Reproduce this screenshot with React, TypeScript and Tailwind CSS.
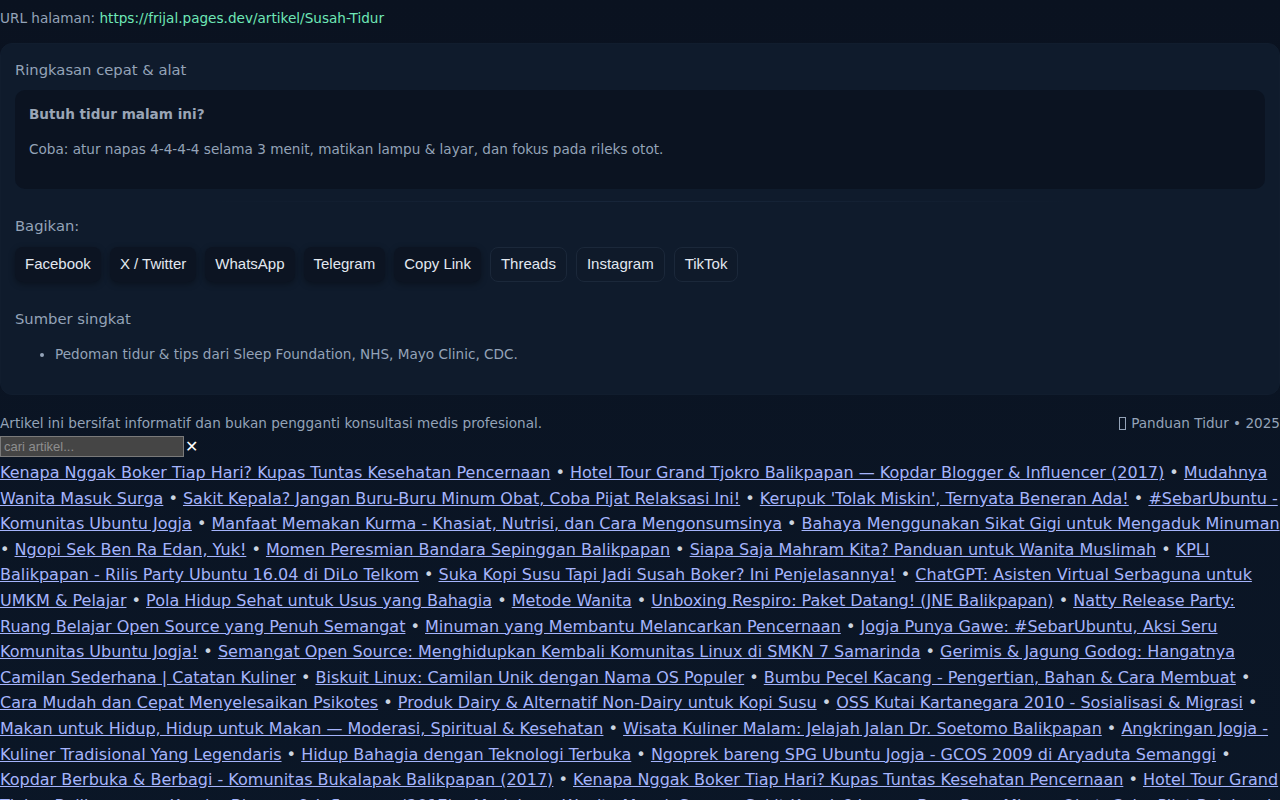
import { FC } from 'react';

const articles = [
  'Kenapa Nggak Boker Tiap Hari? Kupas Tuntas Kesehatan Pencernaan',
  'Hotel Tour Grand Tjokro Balikpapan — Kopdar Blogger & Influencer (2017)',
  'Mudahnya Wanita Masuk Surga',
  'Sakit Kepala? Jangan Buru-Buru Minum Obat, Coba Pijat Relaksasi Ini!',
  "Kerupuk 'Tolak Miskin', Ternyata Beneran Ada!",
  '#SebarUbuntu - Komunitas Ubuntu Jogja',
  'Manfaat Memakan Kurma - Khasiat, Nutrisi, dan Cara Mengonsumsinya',
  'Bahaya Menggunakan Sikat Gigi untuk Mengaduk Minuman',
  'Ngopi Sek Ben Ra Edan, Yuk!',
  'Momen Peresmian Bandara Sepinggan Balikpapan',
  'Siapa Saja Mahram Kita? Panduan untuk Wanita Muslimah',
  'KPLI Balikpapan - Rilis Party Ubuntu 16.04 di DiLo Telkom',
  'Suka Kopi Susu Tapi Jadi Susah Boker? Ini Penjelasannya!',
  'ChatGPT: Asisten Virtual Serbaguna untuk UMKM & Pelajar',
  'Pola Hidup Sehat untuk Usus yang Bahagia',
  'Metode Wanita',
  'Unboxing Respiro: Paket Datang! (JNE Balikpapan)',
  'Natty Release Party: Ruang Belajar Open Source yang Penuh Semangat',
  'Minuman yang Membantu Melancarkan Pencernaan',
  'Jogja Punya Gawe: #SebarUbuntu, Aksi Seru Komunitas Ubuntu Jogja!',
  'Semangat Open Source: Menghidupkan Kembali Komunitas Linux di SMKN 7 Samarinda',
  'Gerimis & Jagung Godog: Hangatnya Camilan Sederhana | Catatan Kuliner',
  'Biskuit Linux: Camilan Unik dengan Nama OS Populer',
  'Bumbu Pecel Kacang - Pengertian, Bahan & Cara Membuat',
  'Cara Mudah dan Cepat Menyelesaikan Psikotes',
  'Produk Dairy & Alternatif Non-Dairy untuk Kopi Susu',
  'OSS Kutai Kartanegara 2010 - Sosialisasi & Migrasi',
  'Makan untuk Hidup, Hidup untuk Makan — Moderasi, Spiritual & Kesehatan',
  'Wisata Kuliner Malam: Jelajah Jalan Dr. Soetomo Balikpapan',
  'Angkringan Jogja - Kuliner Tradisional Yang Legendaris',
  'Hidup Bahagia dengan Teknologi Terbuka',
  'Ngoprek bareng SPG Ubuntu Jogja - GCOS 2009 di Aryaduta Semanggi',
  'Kopdar Berbuka & Berbagi - Komunitas Bukalapak Balikpapan (2017)',
];

const shareLinks = [
  { label: 'Facebook', outlined: false },
  { label: 'X / Twitter', outlined: false },
  { label: 'WhatsApp', outlined: false },
  { label: 'Telegram', outlined: false },
  { label: 'Copy Link', outlined: false },
  { label: 'Threads', outlined: true },
  { label: 'Instagram', outlined: true },
  { label: 'TikTok', outlined: true },
];

const ShareButton: FC<{ label: string; outlined: boolean }> = ({
  label,
  outlined,
}) => (
  <button
    className={
      outlined
        ? "h-[35px] rounded-lg border border-[#1b283a] bg-[#0f1a2a] px-2.5 font-['Liberation_Sans',Arial,sans-serif] text-[15px] text-[#e2e8f0]"
        : "h-[35px] rounded-lg bg-[#0c1422] px-2.5 font-['Liberation_Sans',Arial,sans-serif] text-[15px] text-[#e2e8f0] shadow-[0_2px_6px_rgba(0,0,0,0.35)]"
    }
  >
    {label}
  </button>
);

export default function App() {
  const list = [...articles, ...articles];

  return (
    <div className="min-h-screen bg-gradient-to-b from-[#0a1220] to-[#0b1829] font-['DejaVu_Sans',sans-serif] text-[#94a3b8]">
      <div className="pt-[9px] text-[13.6px] leading-[18px]">
        URL halaman:{' '}
        <a className="text-[#6ee7b7]">https://frijal.pages.dev/artikel/Susah-Tidur</a>
      </div>

      <section className="mt-[16px] rounded-xl border border-[#111d2e] bg-[#0f1b2c] px-[14px] pb-[15px] pt-[15px]">
        <h3 className="text-[14.75px] leading-[22px]">Ringkasan cepat &amp; alat</h3>

        <div className="mt-[9px] rounded-[10px] bg-[#0b1321] px-[14px] pb-[30px] pt-[14px] text-[13.6px] leading-5">
          <h4 className="font-bold text-[#9aa5b6]">Butuh tidur malam ini?</h4>
          <p className="mt-[15px]">
            Coba: atur napas 4-4-4-4 selama 3 menit, matikan lampu &amp; layar, dan fokus pada
            rileks otot.
          </p>
        </div>

        <hr className="mx-auto mt-[12px] h-px w-[70%] border-0 bg-gradient-to-r from-transparent via-[#18263a] to-transparent" />

        <h3 className="mt-[13px] text-[14.75px] leading-[22px]">Bagikan:</h3>
        <div className="mt-[10px] flex flex-wrap gap-[9px]">
          {shareLinks.map((s) => (
            <ShareButton key={s.label} label={s.label} outlined={s.outlined} />
          ))}
        </div>

        <h3 className="mt-[26px] text-[14.75px] leading-[22px]">Sumber singkat</h3>
        <ul className="mt-[14px] list-disc pl-10 text-[13.6px] leading-5">
          <li>Pedoman tidur &amp; tips dari Sleep Foundation, NHS, Mayo Clinic, CDC.</li>
        </ul>
        <div className="h-[15px]" />
      </section>

      <footer className="mt-[19px] flex justify-between text-[13.6px] leading-[18px]">
        <span>Artikel ini bersifat informatif dan bukan pengganti konsultasi medis profesional.</span>
        <span className="flex items-center">
          <span className="mr-[5px] inline-block h-[13px] w-[7px] border border-[#94a3b8]" />
          Panduan Tidur • 2025
        </span>
      </footer>

      <div className="mt-[4px] flex items-center">
        <input
          placeholder="cari artikel..."
          className="h-[21px] w-[184px] border border-[#7a7a7a] bg-[#454545] px-[3px] font-['Liberation_Sans',Arial,sans-serif] text-[13px] text-white placeholder:text-[#8e8e8e]"
        />
        <button className="ml-[1px] text-[16px] font-bold leading-none text-white">✕</button>
      </div>

      <div className="mt-[3px] text-base leading-[1.6]">
        {list.map((t, i) => (
          <span key={i}>
            {i > 0 && <span className="text-[#cbd5e1]"> • </span>}
            <a className="text-[#a5b4fc] underline">{t}</a>
          </span>
        ))}
      </div>
    </div>
  );
}
